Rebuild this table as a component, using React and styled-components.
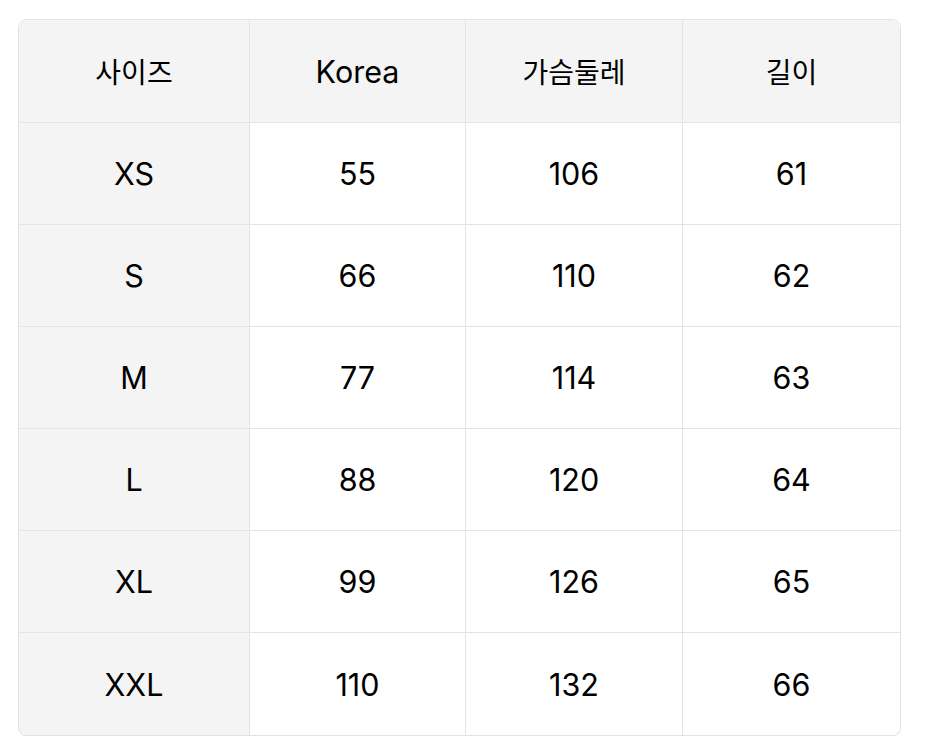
import React from "react";
import styled, { createGlobalStyle } from "styled-components";

const Global = createGlobalStyle`
  html, body { margin: 0; padding: 0; background: #ffffff; }
  body { font-family: Inter, "Noto Sans CJK KR", sans-serif; }
`;

const Page = styled.div`
  padding: 19px 0 0 18px;
`;

const Table = styled.div`
  width: 883px;
  box-sizing: border-box;
  display: grid;
  grid-template-columns: 231px 216px 217px 1fr;
  grid-template-rows: 103px;
  grid-auto-rows: 102px;
  border: 1.5px solid #e2e2e2;
  border-radius: 9px;
  overflow: hidden;
  box-shadow: 0 1px 1px rgba(0, 0, 0, 0.06);
  background: #ffffff;
`;

const Cell = styled.div`
  display: flex;
  align-items: center;
  justify-content: center;
  font-size: ${(p) => (p.$ko ? "28px" : "30.5px")};
  font-weight: 400;
  color: #000000;
  font-family: Inter, "Noto Sans CJK KR", sans-serif;
  background: ${(p) => (p.$shaded ? "#f4f4f4" : "#ffffff")};
  border-right: ${(p) => (p.$lastCol ? "none" : "1px solid #e4e4e4")};
  border-bottom: ${(p) => (p.$lastRow ? "none" : "1px solid #e4e4e4")};
`;

const header = ["사이즈", "Korea", "가슴둘레", "길이"];
const rows = [
  ["XS", "55", "106", "61"],
  ["S", "66", "110", "62"],
  ["M", "77", "114", "63"],
  ["L", "88", "120", "64"],
  ["XL", "99", "126", "65"],
  ["XXL", "110", "132", "66"],
];

const isKorean = (s) => /[\uac00-\ud7a3]/.test(s);

export default function App() {
  return (
    <Page>
      <Global />
      <Table>
        {header.map((h, i) => (
          <Cell key={"h" + i} $shaded $lastCol={i === 3} $ko={isKorean(h)}>
            {h}
          </Cell>
        ))}
        {rows.map((r, ri) =>
          r.map((v, ci) => (
            <Cell
              key={ri + "-" + ci}
              $shaded={ci === 0}
              $lastCol={ci === 3}
              $lastRow={ri === rows.length - 1}
            >
              {v}
            </Cell>
          ))
        )}
      </Table>
    </Page>
  );
}
